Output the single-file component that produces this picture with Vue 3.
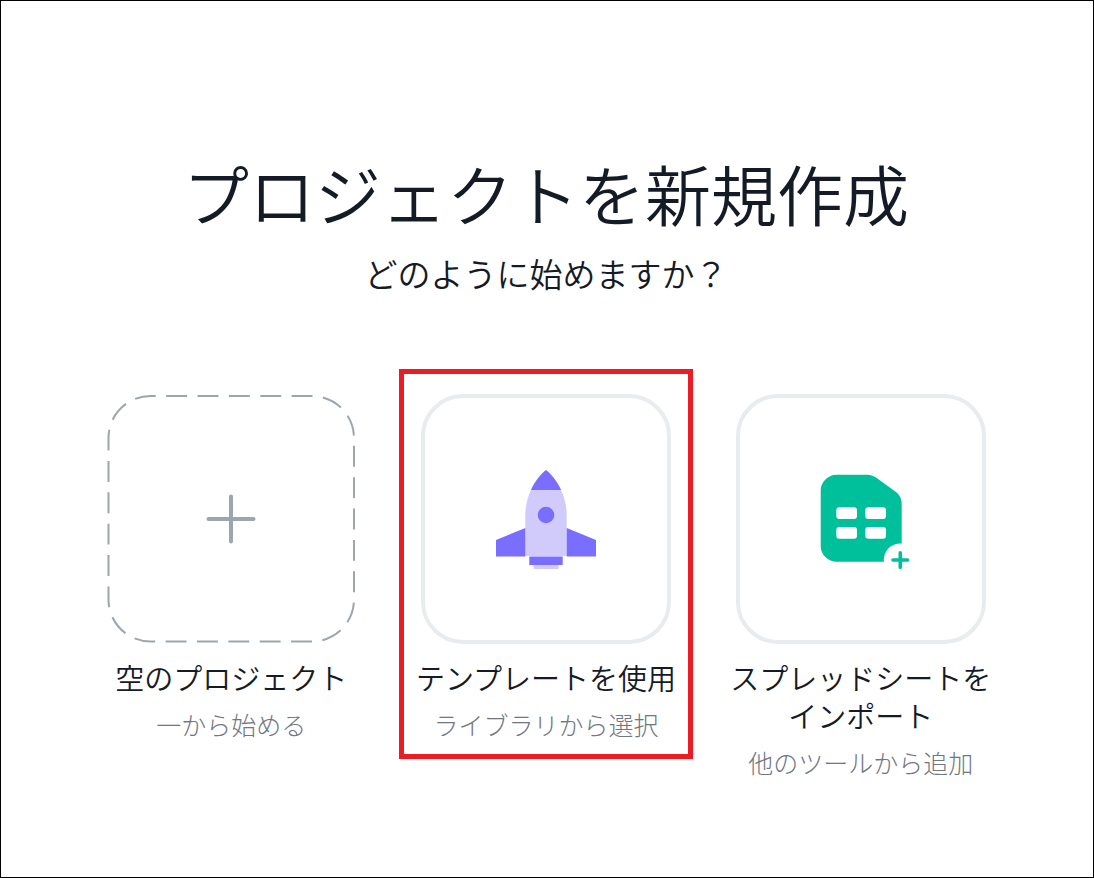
<script setup>
const options = [
  { id: 'blank', title: ['空のプロジェクト'], note: '一から始める' },
  { id: 'template', title: ['テンプレートを使用'], note: 'ライブラリから選択', highlighted: true },
  { id: 'import', title: ['スプレッドシートを', 'インポート'], note: '他のツールから追加' },
]
</script>

<template>
  <main class="page">
    <header class="intro">
      <h1 class="heading">プロジェクトを新規作成</h1>
      <p class="question">どのように始めますか？</p>
    </header>

    <div class="options">
      <button
        v-for="option in options"
        :key="option.id"
        type="button"
        class="option"
        :class="{ highlighted: option.highlighted }"
      >
        <span class="tile" :class="{ outlined: option.id !== 'blank' }">
          <svg v-if="option.id === 'blank'" class="blank" viewBox="0 0 250 250" aria-hidden="true">
            <rect
              x="2.5" y="2" width="245.5" height="245.5" rx="42"
              pathLength="870" stroke-dasharray="20 10" stroke-dashoffset="-15"
              fill="none" stroke="#9ca6af" stroke-width="2"
            />
            <path d="M125 102.500V147.500M102.500 125H147.500" fill="none" stroke="#9ca6af" stroke-width="4" stroke-linecap="round" />
          </svg>

          <svg v-else-if="option.id === 'template'" class="icon" viewBox="0 0 100 100" aria-hidden="true">
            <defs>
              <clipPath id="nose"><rect x="0" y="0" width="100" height="21" /></clipPath>
            </defs>
            <path d="M50 1C40 9 29.3 26 29.3 46V87H70.7V46C70.7 26 60 9 50 1Z" fill="#d0cbfb" />
            <path d="M50 1C40 9 29.3 26 29.3 46V87H70.7V46C70.7 26 60 9 50 1Z" fill="#796eff" clip-path="url(#nose)" />
            <circle cx="50" cy="46" r="8.3" fill="#796eff" />
            <path d="M0 71L29.3 59V87.5H0ZM100 71L70.7 59V87.5H100ZM33.3 87.5H66.7V96H33.3Z" fill="#796eff" />
            <path d="M37.5 96H62.5V100H37.5Z" fill="#d0cbfb" />
          </svg>

          <svg v-else class="icon" viewBox="0 0 100 100" aria-hidden="true">
            <path
              d="M25.7 5.7H56C60 5.7 63 7 66 9.2L84 22.3C88.5 25.5 90.7 29.5 90.7 35V92.7H25.7A16 16 0 0 1 9.7 76.7V21.7A16 16 0 0 1 25.7 5.7Z"
              fill="#00c09c"
            />
            <g fill="#fff">
              <rect x="25.3" y="38.3" width="20.7" height="11.7" rx="3" />
              <rect x="54.3" y="38.3" width="20.7" height="11.7" rx="3" />
              <rect x="25.3" y="58" width="20.7" height="11.7" rx="3" />
              <rect x="54.3" y="58" width="20.7" height="11.7" rx="3" />
              <circle cx="89.3" cy="91" r="16.5" />
            </g>
            <path d="M89.3 83.7V98.3M82 91H96.600" fill="none" stroke="#00c09c" stroke-width="3.6" stroke-linecap="round" />
          </svg>
        </span>
        <span class="title">
          <span v-for="line in option.title" :key="line" class="line">{{ line }}</span>
        </span>
        <span class="note">{{ option.note }}</span>
      </button>
    </div>
  </main>
</template>

<style>
body {
  margin: 0;
  background: #fff;
}
</style>

<style scoped>
.page {
  box-sizing: border-box;
  min-height: 100vh;
  padding: 151px 75px 40px 73px;
  border: 1px solid #000;
  background: #fff;
  color: #151b26;
  font-family: "Noto Sans CJK JP", sans-serif;
}

.intro {
  text-align: center;
}

.heading {
  margin: 0;
  font-size: 66px;
  font-weight: 350;
  line-height: 80px;
}

.question {
  margin: 17px 0 0;
  font-size: 33px;
  font-weight: 350;
  line-height: 48px;
}

.options {
  display: grid;
  grid-template-columns: repeat(3, 1fr);
  align-items: start;
  max-width: 945px;
  margin: 97px auto 0;
}

.option {
  position: relative;
  display: flex;
  flex-direction: column;
  align-items: center;
  padding: 0;
  border: 0;
  background: none;
  color: inherit;
  font: inherit;
  cursor: pointer;
}

.highlighted::after {
  content: "";
  position: absolute;
  inset: -25px 10px -17px;
  border: 5px solid #eb1c24;
}

.tile {
  display: flex;
  align-items: center;
  justify-content: center;
  box-sizing: border-box;
  width: 250px;
  height: 250px;
}

.outlined {
  border: 4px solid #e8ecee;
  border-radius: 42px;
}

.blank {
  width: 250px;
  height: 250px;
}

.icon {
  width: 100px;
  height: 100px;
}

.title {
  margin-top: 14px;
  font-size: 29px;
  font-weight: 350;
  line-height: 38px;
}

.line {
  display: block;
  white-space: nowrap;
}

.note {
  margin-top: 10px;
  color: #6f7782;
  font-size: 25px;
  font-weight: 300;
  line-height: 36px;
  white-space: nowrap;
}
</style>
